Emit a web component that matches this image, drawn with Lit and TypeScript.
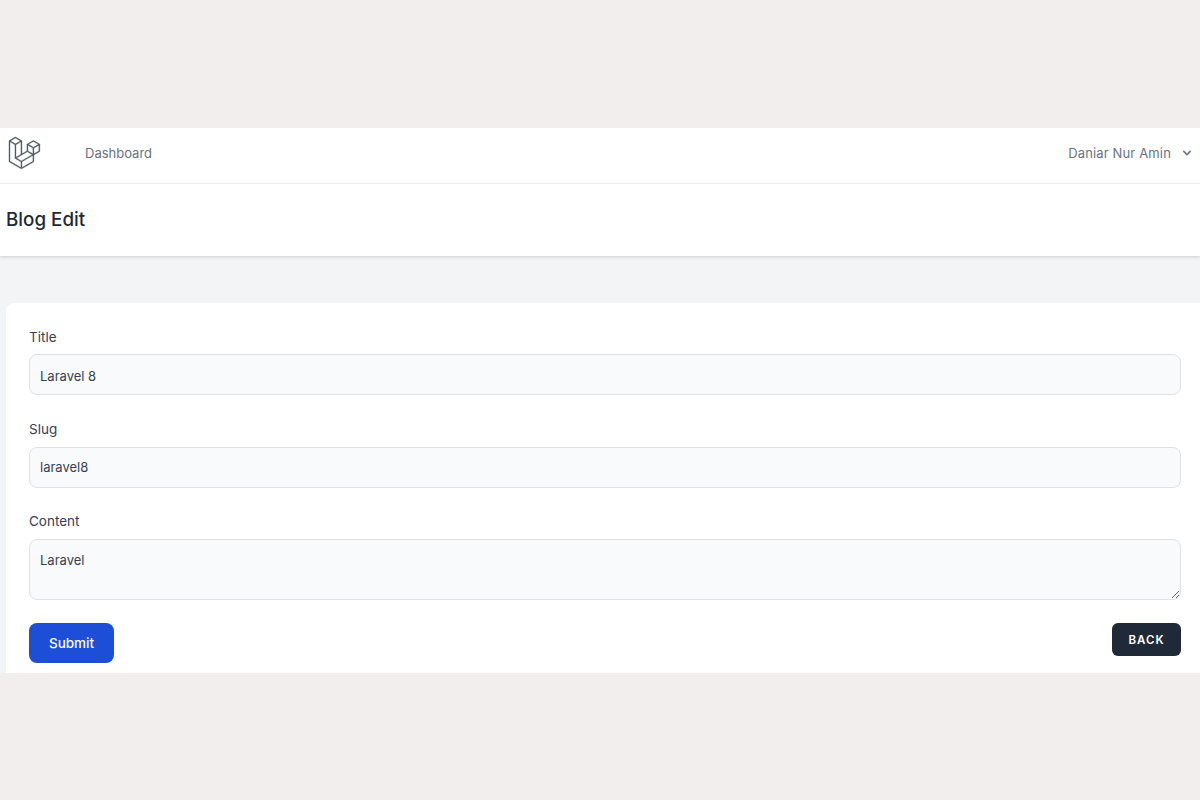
import { LitElement, html, css } from 'lit';
import { customElement } from 'lit/decorators.js';

const LOGO = "M305.8 81.125C305.77 80.995 305.69 80.885 305.65 80.755C305.56 80.525 305.49 80.285 305.37 80.075C305.29 79.935 305.17 79.815 305.07 79.685C304.94 79.515 304.83 79.325 304.68 79.175C304.55 79.045 304.39 78.955 304.25 78.845C304.09 78.715 303.95 78.575 303.77 78.475L251.32 48.275C249.97 47.495 248.31 47.495 246.96 48.275L194.51 78.475C194.33 78.575 194.19 78.725 194.03 78.845C193.89 78.955 193.73 79.045 193.6 79.175C193.45 79.325 193.34 79.515 193.21 79.685C193.11 79.815 192.99 79.935 192.91 80.075C192.79 80.285 192.71 80.525 192.63 80.755C192.58 80.875 192.51 80.995 192.48 81.125C192.38 81.495 192.33 81.875 192.33 82.265V139.625L148.62 164.795V52.575C148.62 52.185 148.57 51.805 148.47 51.435C148.44 51.305 148.36 51.195 148.32 51.065C148.23 50.835 148.16 50.595 148.04 50.385C147.96 50.245 147.84 50.125 147.74 49.995C147.61 49.825 147.5 49.635 147.35 49.485C147.22 49.355 147.06 49.265 146.92 49.155C146.76 49.025 146.62 48.885 146.44 48.785L93.99 18.585C92.64 17.805 90.98 17.805 89.63 18.585L37.18 48.785C37 48.885 36.86 49.035 36.7 49.155C36.56 49.265 36.4 49.355 36.27 49.485C36.12 49.635 36.01 49.825 35.88 49.995C35.78 50.125 35.66 50.245 35.58 50.385C35.46 50.595 35.38 50.835 35.3 51.065C35.25 51.185 35.18 51.305 35.15 51.435C35.05 51.805 35 52.185 35 52.575V232.235C35 233.795 35.84 235.245 37.19 236.025L142.1 296.425C142.33 296.555 142.58 296.635 142.82 296.725C142.93 296.765 143.04 296.835 143.16 296.865C143.53 296.965 143.9 297.015 144.28 297.015C144.66 297.015 145.03 296.965 145.4 296.865C145.5 296.835 145.59 296.775 145.69 296.745C145.95 296.655 146.21 296.565 146.45 296.435L251.36 236.035C252.72 235.255 253.55 233.815 253.55 232.245V174.885L303.81 145.945C305.17 145.165 306 143.725 306 142.155V82.265C305.95 81.875 305.89 81.495 305.8 81.125ZM144.2 227.205L100.57 202.515L146.39 176.135L196.66 147.195L240.33 172.335L208.29 190.625L144.2 227.205ZM244.75 114.995V164.795L226.39 154.225L201.03 139.625V89.825L219.39 100.395L244.75 114.995ZM249.12 57.105L292.81 82.265L249.12 107.425L205.43 82.265L249.12 57.105ZM114.49 184.425L96.13 194.995V85.305L121.49 70.705L139.85 60.135V169.815L114.49 184.425ZM91.76 27.425L135.45 52.585L91.76 77.745L48.07 52.585L91.76 27.425ZM43.67 60.135L62.03 70.705L87.39 85.305V202.545V202.555V202.565C87.39 202.735 87.44 202.895 87.46 203.055C87.49 203.265 87.49 203.485 87.55 203.695V203.705C87.6 203.875 87.69 204.035 87.76 204.195C87.84 204.375 87.89 204.575 87.99 204.745C87.99 204.745 87.99 204.755 88 204.755C88.09 204.905 88.22 205.035 88.33 205.175C88.45 205.335 88.55 205.495 88.69 205.635L88.7 205.645C88.82 205.765 88.98 205.855 89.12 205.965C89.28 206.085 89.42 206.225 89.59 206.325C89.6 206.325 89.6 206.325 89.61 206.335C89.62 206.335 89.62 206.345 89.63 206.345L139.87 234.775V285.065L43.67 229.705V60.135ZM244.75 229.705L148.58 285.075V234.775L219.8 194.115L244.75 179.875V229.705ZM297.2 139.625L253.49 164.795V114.995L278.85 100.395L297.21 89.825V139.625H297.2Z";

@customElement('app-root')
export class AppRoot extends LitElement {
  static styles = css`
    :host {
      display: block;
      height: 800px;
      padding-top: 128px;
      box-sizing: border-box;
      background: #f2eeed;
      font-family: Inter, "Noto Sans", sans-serif;
      color: #374151;
    }
    .frame {
      height: 545px;
      overflow: hidden;
      background: #f3f4f6;
    }
    .nav {
      height: 49px;
      display: flex;
      align-items: center;
      padding: 0 5px 6px 5px;
      background: #fff;
      border-bottom: 1px solid #f3f4f6;
    }
    .logo {
      width: 36px;
      height: 36px;
      fill: #4b5563;
      stroke: #4b5563;
      stroke-width: 3;
      display: block;
    }
    .nav-link {
      margin-left: 44px;
      font-size: 13px;
      color: #6b7280;
    }
    .user {
      margin-left: auto;
      display: flex;
      align-items: center;
      gap: 8px;
      font-size: 13px;
      letter-spacing: 0.15px;
      color: #6b7280;
    }
    .chevron {
      width: 16px;
      height: 16px;
      fill: #6b7280;
      display: block;
    }
    .header {
      height: 72px;
      display: flex;
      align-items: center;
      padding-left: 6px;
      background: #fff;
      box-shadow: 0 1px 3px rgba(0, 0, 0, 0.16);
    }
    h2 {
      margin: 0;
      font-size: 18.8px;
      font-weight: 500;
      line-height: 24px;
      color: #1f2937;
    }
    .main {
      padding: 47px 0 0 6px;
    }
    .card {
      margin-right: -8px;
      padding: 24px 27px 20px 23px;
      background: #fff;
      border-radius: 8px;
    }
    label {
      display: block;
      height: 28px;
      line-height: 20px;
      font-size: 13.5px;
      font-weight: 400;
      color: #374151;
    }
    .field {
      margin-bottom: 23px;
    }
    .field.first label {
      height: 27px;
    }
    .field.first {
      margin-bottom: 24px;
    }
    input,
    textarea {
      display: block;
      width: 100%;
      box-sizing: border-box;
      border: 1px solid #dfe1e6;
      border-radius: 8px;
      background: #f9fafb;
      padding: 0 10px;
      font: inherit;
      font-size: 13px;
      color: #374151;
      outline: none;
      margin: 0;
    }
    input {
      height: 41px;
    }
    .field.first input {
      padding-top: 2px;
    }
    .field.slug input {
      padding-bottom: 2px;
    }
    textarea {
      height: 61px;
      padding-top: 11px;
      line-height: 18px;
    }
    .actions {
      display: flex;
      justify-content: space-between;
      align-items: flex-start;
    }
    .submit {
      width: 85px;
      height: 40px;
      border: none;
      border-radius: 8px;
      background: #1d4ed8;
      color: #fff;
      font: inherit;
      font-size: 13.5px;
      font-weight: 500;
      padding: 0;
    }
    .back {
      width: 69px;
      height: 33px;
      border: none;
      border-radius: 6px;
      background: #1f2937;
      color: #fff;
      font: inherit;
      font-size: 11.5px;
      font-weight: 600;
      letter-spacing: 0.09em;
      padding: 0;
    }
  `;

  render() {
    return html`
      <div class="frame">
        <nav class="nav">
          <svg class="logo" viewBox="0 0 316 316"><path d=${LOGO}></path></svg>
          <span class="nav-link">Dashboard</span>
          <div class="user">
            <span>Daniar Nur Amin</span>
            <svg class="chevron" viewBox="0 0 20 20">
              <path fill-rule="evenodd" clip-rule="evenodd" d="M5.293 7.293a1 1 0 011.414 0L10 10.586l3.293-3.293a1 1 0 111.414 1.414l-4 4a1 1 0 01-1.414 0l-4-4a1 1 0 010-1.414z"></path>
            </svg>
          </div>
        </nav>
        <header class="header"><h2>Blog Edit</h2></header>
        <main class="main">
          <div class="card">
            <div class="field first">
              <label>Title</label>
              <input type="text" .value=${'Laravel 8'} />
            </div>
            <div class="field slug">
              <label>Slug</label>
              <input type="text" .value=${'laravel8'} />
            </div>
            <div class="field">
              <label>Content</label>
              <textarea .value=${'Laravel'}></textarea>
            </div>
            <div class="actions">
              <button class="submit">Submit</button>
              <button class="back">BACK</button>
            </div>
          </div>
        </main>
      </div>
    `;
  }
}
